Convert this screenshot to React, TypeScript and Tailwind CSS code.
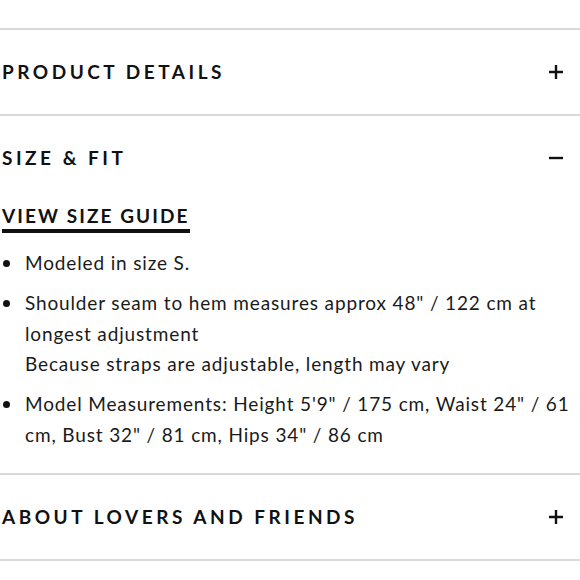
import React from "react";

const heading = "text-[19px] font-bold tracking-[0.185em] text-[#111]";

const Plus = () => (
  <svg width="16" height="16" viewBox="0 0 16 16" className="text-[#111]">
    <path d="M8 1v14M1 8h14" stroke="currentColor" strokeWidth="2.4" />
  </svg>
);

const Minus = () => (
  <svg width="16" height="16" viewBox="0 0 16 16" className="text-[#111]">
    <path d="M1 8h14" stroke="currentColor" strokeWidth="2.4" />
  </svg>
);

const Row = ({ title, open }: { title: string; open?: boolean }) => (
  <div className="flex items-center justify-between h-[84px] pl-[2px] pr-[16px]">
    <span className={heading}>{title}</span>
    {open ? <Minus /> : <Plus />}
  </div>
);

const Bullet = ({ children }: { children: React.ReactNode }) => (
  <li className="flex">
    <span className="w-[25px] shrink-0 flex pt-[12px] pl-[3px]">
      <span className="block w-[7px] h-[7px] rounded-full bg-[#111]" />
    </span>
    <span>{children}</span>
  </li>
);

const Divider = () => <div className="border-t-2 border-[#d9d9d9]" />;

export default function App() {
  return (
    <div
      className="w-[580px] h-[580px] overflow-hidden bg-white text-[#111]"
      style={{ fontFamily: "Lato, 'Open Sans', sans-serif" }}
    >
      <div className="h-[28px] overflow-hidden relative">
        <div className="absolute left-[25px] top-[-26px] text-[19px] leading-[30px] tracking-[0.045em]">
          Free U.S. Shipping &amp; Returns
        </div>
      </div>
      <Divider />
      <Row title="PRODUCT DETAILS" />
      <Divider />
      <Row title="SIZE & FIT" open />
      <div className="pr-[8px] pb-[23px]">
        <a className="block w-fit ml-[2px] mt-[5px] text-[19px] font-bold tracking-[0.11em] leading-[22px] border-b-[4px] border-[#111] pb-[2px]">
          VIEW SIZE GUIDE
        </a>
        <ul className="mt-[15px] flex flex-col gap-[9.5px] text-[19px] leading-[30.5px] tracking-[0.045em] text-[#1a1a1a]">
          <Bullet>Modeled in size S.</Bullet>
          <Bullet>
            Shoulder seam to hem measures approx 48" / 122 cm at longest adjustment
            <br />
            Because straps are adjustable, length may vary
          </Bullet>
          <Bullet>
            Model Measurements: Height 5'9" / 175 cm, Waist 24" / 61 cm, Bust 32" / 81 cm, Hips 34" / 86 cm
          </Bullet>
        </ul>
      </div>
      <Divider />
      <Row title="ABOUT LOVERS AND FRIENDS" />
      <Divider />
    </div>
  );
}
